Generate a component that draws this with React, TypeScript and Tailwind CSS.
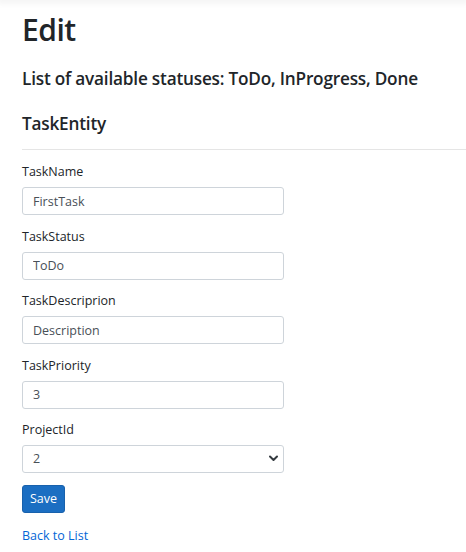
import React from 'react';

const fields: { label: string; value: string }[] = [
  { label: 'TaskName', value: 'FirstTask' },
  { label: 'TaskStatus', value: 'ToDo' },
  { label: 'TaskDescriprion', value: 'Description' },
  { label: 'TaskPriority', value: '3' },
];

const App: React.FC = () => {
  return (
    <div className="min-h-[552px] bg-white text-[#212529] font-['Open_Sans',sans-serif] overflow-hidden">
      <div className="h-0 shadow-[0_0_6px_3px_rgba(0,0,0,0.06)]" />
      <div className="pl-[22px]">
        <h1 className="text-[30px] leading-[36px] font-semibold pt-[12px] mb-[20px] tracking-[-0.5px]">Edit</h1>
        <h4 className="text-[17.2px] leading-[22px] font-semibold mb-[23px] tracking-[-0.2px]">
          List of available statuses: ToDo, InProgress, Done
        </h4>
        <h4 className="text-[17.2px] leading-[22px] font-semibold mb-[14px] tracking-[-0.2px]">TaskEntity</h4>
        <hr className="border-0 border-t border-[#e5e5e5] mb-[13px]" />
        <form className="w-[262px] flex flex-col">
          {fields.map((f) => (
            <div key={f.label} className="mb-[12.5px]">
              <label className="block text-[12.5px] leading-[18px] mb-[6px]">{f.label}</label>
              <input
                readOnly
                value={f.value}
                className="block w-full h-[28px] px-[10px] text-[12.5px] text-[#495057] border border-[#ced4da] rounded-[3px] outline-none"
              />
            </div>
          ))}
          <div className="mb-[12px]">
            <label className="block text-[12.5px] leading-[18px] mb-[6px]">ProjectId</label>
            <div className="relative">
              <select
                defaultValue="2"
                className="block w-full h-[28px] pl-[10px] pr-[24px] text-[12.5px] text-[#495057] border border-[#ced4da] rounded-[3px] outline-none appearance-none bg-white"
              >
                <option value="1">1</option>
                <option value="2">2</option>
              </select>
              <svg
                className="absolute right-[6px] top-[10px] pointer-events-none"
                width="9"
                height="7"
                viewBox="0 0 9 7"
                fill="none"
              >
                <path d="M1 1.5 L4.5 5 L8 1.5" stroke="#343a40" strokeWidth="2" strokeLinecap="round" strokeLinejoin="round" />
              </svg>
            </div>
          </div>
          <div>
            <button
              type="button"
              className="h-[28px] px-[7px] text-[12.5px] text-white bg-[#1b6ec2] border border-[#1861ac] rounded-[3px]"
            >
              Save
            </button>
          </div>
        </form>
        <div className="mt-[9px]">
          <a href="#" className="text-[12.5px] text-[#0366d6]">Back to List</a>
        </div>
      </div>
    </div>
  );
};

export default App;
